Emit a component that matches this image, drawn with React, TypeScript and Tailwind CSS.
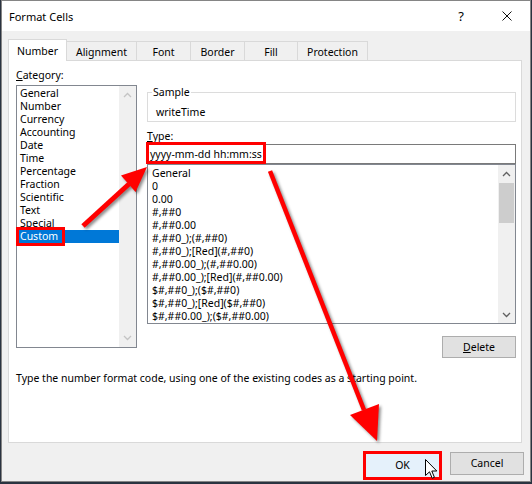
import React from 'react';

const categories = [
  'General',
  'Number',
  'Currency',
  'Accounting',
  'Date',
  'Time',
  'Percentage',
  'Fraction',
  'Scientific',
  'Text',
  'Special',
  'Custom',
];

const formats = [
  'General',
  '0',
  '0.00',
  '#,##0',
  '#,##0.00',
  '#,##0_);(#,##0)',
  '#,##0_);[Red](#,##0)',
  '#,##0.00_);(#,##0.00)',
  '#,##0.00_);[Red](#,##0.00)',
  '$#,##0_);($#,##0)',
  '$#,##0_);[Red]($#,##0)',
  '$#,##0.00_);($#,##0.00)',
];

const Chevron = ({ up, color }: { up?: boolean; color: string }) => (
  <svg width="9" height="6" viewBox="0 0 9 6">
    <polyline
      points={up ? '1,5 4.5,1.5 8,5' : '1,1 4.5,4.5 8,1'}
      fill="none"
      stroke={color}
      strokeWidth="1.3"
    />
  </svg>
);

const App: React.FC = () => {
  return (
    <div className="relative w-[532px] h-[484px] bg-[#2a3340] overflow-hidden font-['Noto_Sans',sans-serif] text-[10.5px] leading-[13px] text-black">
      {/* Dialog window */}
      <div className="ml-[1px] w-[530px] h-[482px] bg-[#f0f0f0] border border-[#858585] flex flex-col">
        {/* Title bar */}
        <div className="h-[30px] bg-white flex items-center pl-[7px]">
          <span className="text-[11px]">Format Cells</span>
          <div className="ml-auto flex h-full">
            <div className="w-[46px] h-full flex items-center justify-center text-[13px]">?</div>
            <div className="w-[46px] h-full flex items-center justify-center">
              <svg width="10" height="10" viewBox="0 0 10 10">
                <path d="M0.5 0.5 L9.5 9.5 M9.5 0.5 L0.5 9.5" stroke="#111" strokeWidth="1" />
              </svg>
            </div>
          </div>
        </div>

        {/* Body */}
        <div className="flex-1 px-[6px] pt-[8px] flex flex-col">
          {/* Tabs */}
          <div className="flex h-[21px] items-start">
            <div className="relative z-10 w-[59px] h-[22px] bg-white border border-b-0 border-[#d9d9d9] flex items-center justify-center pt-[2px]">
              Number
            </div>
            <div className="w-[70px] h-[19px] mt-[2px] border border-l-0 border-b-0 border-[#d9d9d9] flex items-center justify-center pt-[2px]">
              Alignment
            </div>
            <div className="w-[54px] h-[19px] mt-[2px] border border-l-0 border-b-0 border-[#d9d9d9] flex items-center justify-center pt-[2px]">
              Font
            </div>
            <div className="w-[54px] h-[19px] mt-[2px] border border-l-0 border-b-0 border-[#d9d9d9] flex items-center justify-center pt-[2px]">
              Border
            </div>
            <div className="w-[53px] h-[19px] mt-[2px] border border-l-0 border-b-0 border-[#d9d9d9] flex items-center justify-center pt-[2px]">
              Fill
            </div>
            <div className="w-[70px] h-[19px] mt-[2px] border border-l-0 border-b-0 border-[#d9d9d9] flex items-center justify-center pt-[2px]">
              Protection
            </div>
          </div>

          {/* Tab panel */}
          <div className="w-[514px] h-[383px] bg-white border border-[#d9d9d9] pl-[7px] pr-[4px] pt-[7px] flex flex-col">
            <div className="flex gap-[10px]">
              {/* Category column */}
              <div className="w-[121px] flex flex-col">
                <div className="h-[14px] leading-[14px]">
                  <u>C</u>ategory:
                </div>
                <div className="relative mt-[3px] h-[263px] border border-[#828790] flex">
                  <div className="flex-1 pt-[1px] overflow-hidden">
                    {categories.map((c) => (
                      <div
                        key={c}
                        className={
                          c === 'Custom'
                            ? 'h-[13px] pl-[3px] bg-[#0078d7] text-white'
                            : 'h-[13px] pl-[3px]'
                        }
                      >
                        {c}
                      </div>
                    ))}
                  </div>
                  <div className="w-[17px] bg-[#f0f0f0] flex flex-col justify-between items-center py-[6px]">
                    <Chevron up color="#c4c4c4" />
                    <Chevron color="#c4c4c4" />
                  </div>
                  {/* annotation box */}
                  <div className="absolute left-[-1px] top-[141px] w-[49px] h-[19px] border-[3px] border-[#ff0000]" />
                </div>
              </div>

              {/* Type column */}
              <div className="w-[369px] flex flex-col">
                <fieldset className="mt-[17px] border border-[#dcdcdc] pb-[2px]">
                  <legend className="ml-[4px] px-[1px] leading-[14px]">Sample</legend>
                  <div className="mt-[6px] pl-[8px] leading-[14px]">writeTime</div>
                </fieldset>
                <div className="mt-[7px] h-[14px] leading-[14px]">
                  <u>T</u>ype:
                </div>
                <div className="relative mt-[1px]">
                  <div className="h-[20px] border border-[#7a7a7a] pl-[2px] flex items-center">
                    yyyy-mm-dd hh:mm:ss
                  </div>
                  <div className="absolute left-[-1px] top-[-2px] w-[120px] h-[22px] border-[3px] border-[#ff0000]" />
                </div>
                <div className="h-[160px] border border-[#828790] flex">
                  <div className="flex-1 pl-[4px] pt-[1.5px] overflow-hidden">
                    {formats.map((f) => (
                      <div key={f} className="h-[13px] whitespace-nowrap">
                        {f}
                      </div>
                    ))}
                  </div>
                  <div className="w-[17px] bg-[#f0f0f0] flex flex-col items-center">
                    <div className="h-[18px] flex items-center justify-center">
                      <Chevron up color="#606060" />
                    </div>
                    <div className="w-[15px] h-[40px] bg-[#cdcdcd]" />
                    <div className="mt-auto h-[17px] flex items-center justify-center">
                      <Chevron color="#606060" />
                    </div>
                  </div>
                </div>
                <div className="self-end mt-[12px] w-[74px] h-[22px] bg-[#e1e1e1] border border-[#adadad] flex items-center justify-center">
                  <span>
                    <u>D</u>elete
                  </span>
                </div>
              </div>
            </div>
            <div className="mt-[13px] leading-[14px]">
              Type the number format code, using one of the existing codes as a starting point.
            </div>
          </div>

          {/* Dialog buttons */}
          <div className="mt-[8px] flex justify-end items-start gap-[8px]">
            <div className="w-[79px] h-[29px] border-[3px] border-[#ff0000] bg-[#e5f1fb] flex items-center justify-center">
              OK
            </div>
            <div className="mt-[1px] w-[74px] h-[23px] bg-[#e1e1e1] border border-[#adadad] flex items-center justify-center">
              Cancel
            </div>
          </div>
        </div>
      </div>

      {/* Annotation arrows */}
      <svg
        className="absolute inset-0 pointer-events-none z-20 drop-shadow-[2px_2px_1.5px_rgba(0,0,0,0.45)]"
        width="532"
        height="484"
        viewBox="0 0 532 484"
      >
        <line x1="83" y1="226" x2="129" y2="184" stroke="#ff0000" strokeWidth="5" />
        <polygon points="147,167 121,175.5 135.6,192" fill="#ff0000" />
        <line x1="270" y1="171" x2="364" y2="410" stroke="#ff0000" strokeWidth="4.5" />
        <polygon points="377,441 350,415 379,404" fill="#ff0000" />
      </svg>

      {/* Mouse cursor */}
      <svg className="absolute left-[425px] top-[459px] z-30" width="13" height="21" viewBox="0 0 13 21">
        <path
          d="M0.5 0.5 L0.5 16.5 L4.5 12.8 L7.2 19.2 L9.4 18.3 L6.8 12 L11.8 12 Z"
          fill="white"
          stroke="black"
          strokeWidth="1"
          strokeLinejoin="round"
        />
      </svg>
    </div>
  );
};

export default App;
